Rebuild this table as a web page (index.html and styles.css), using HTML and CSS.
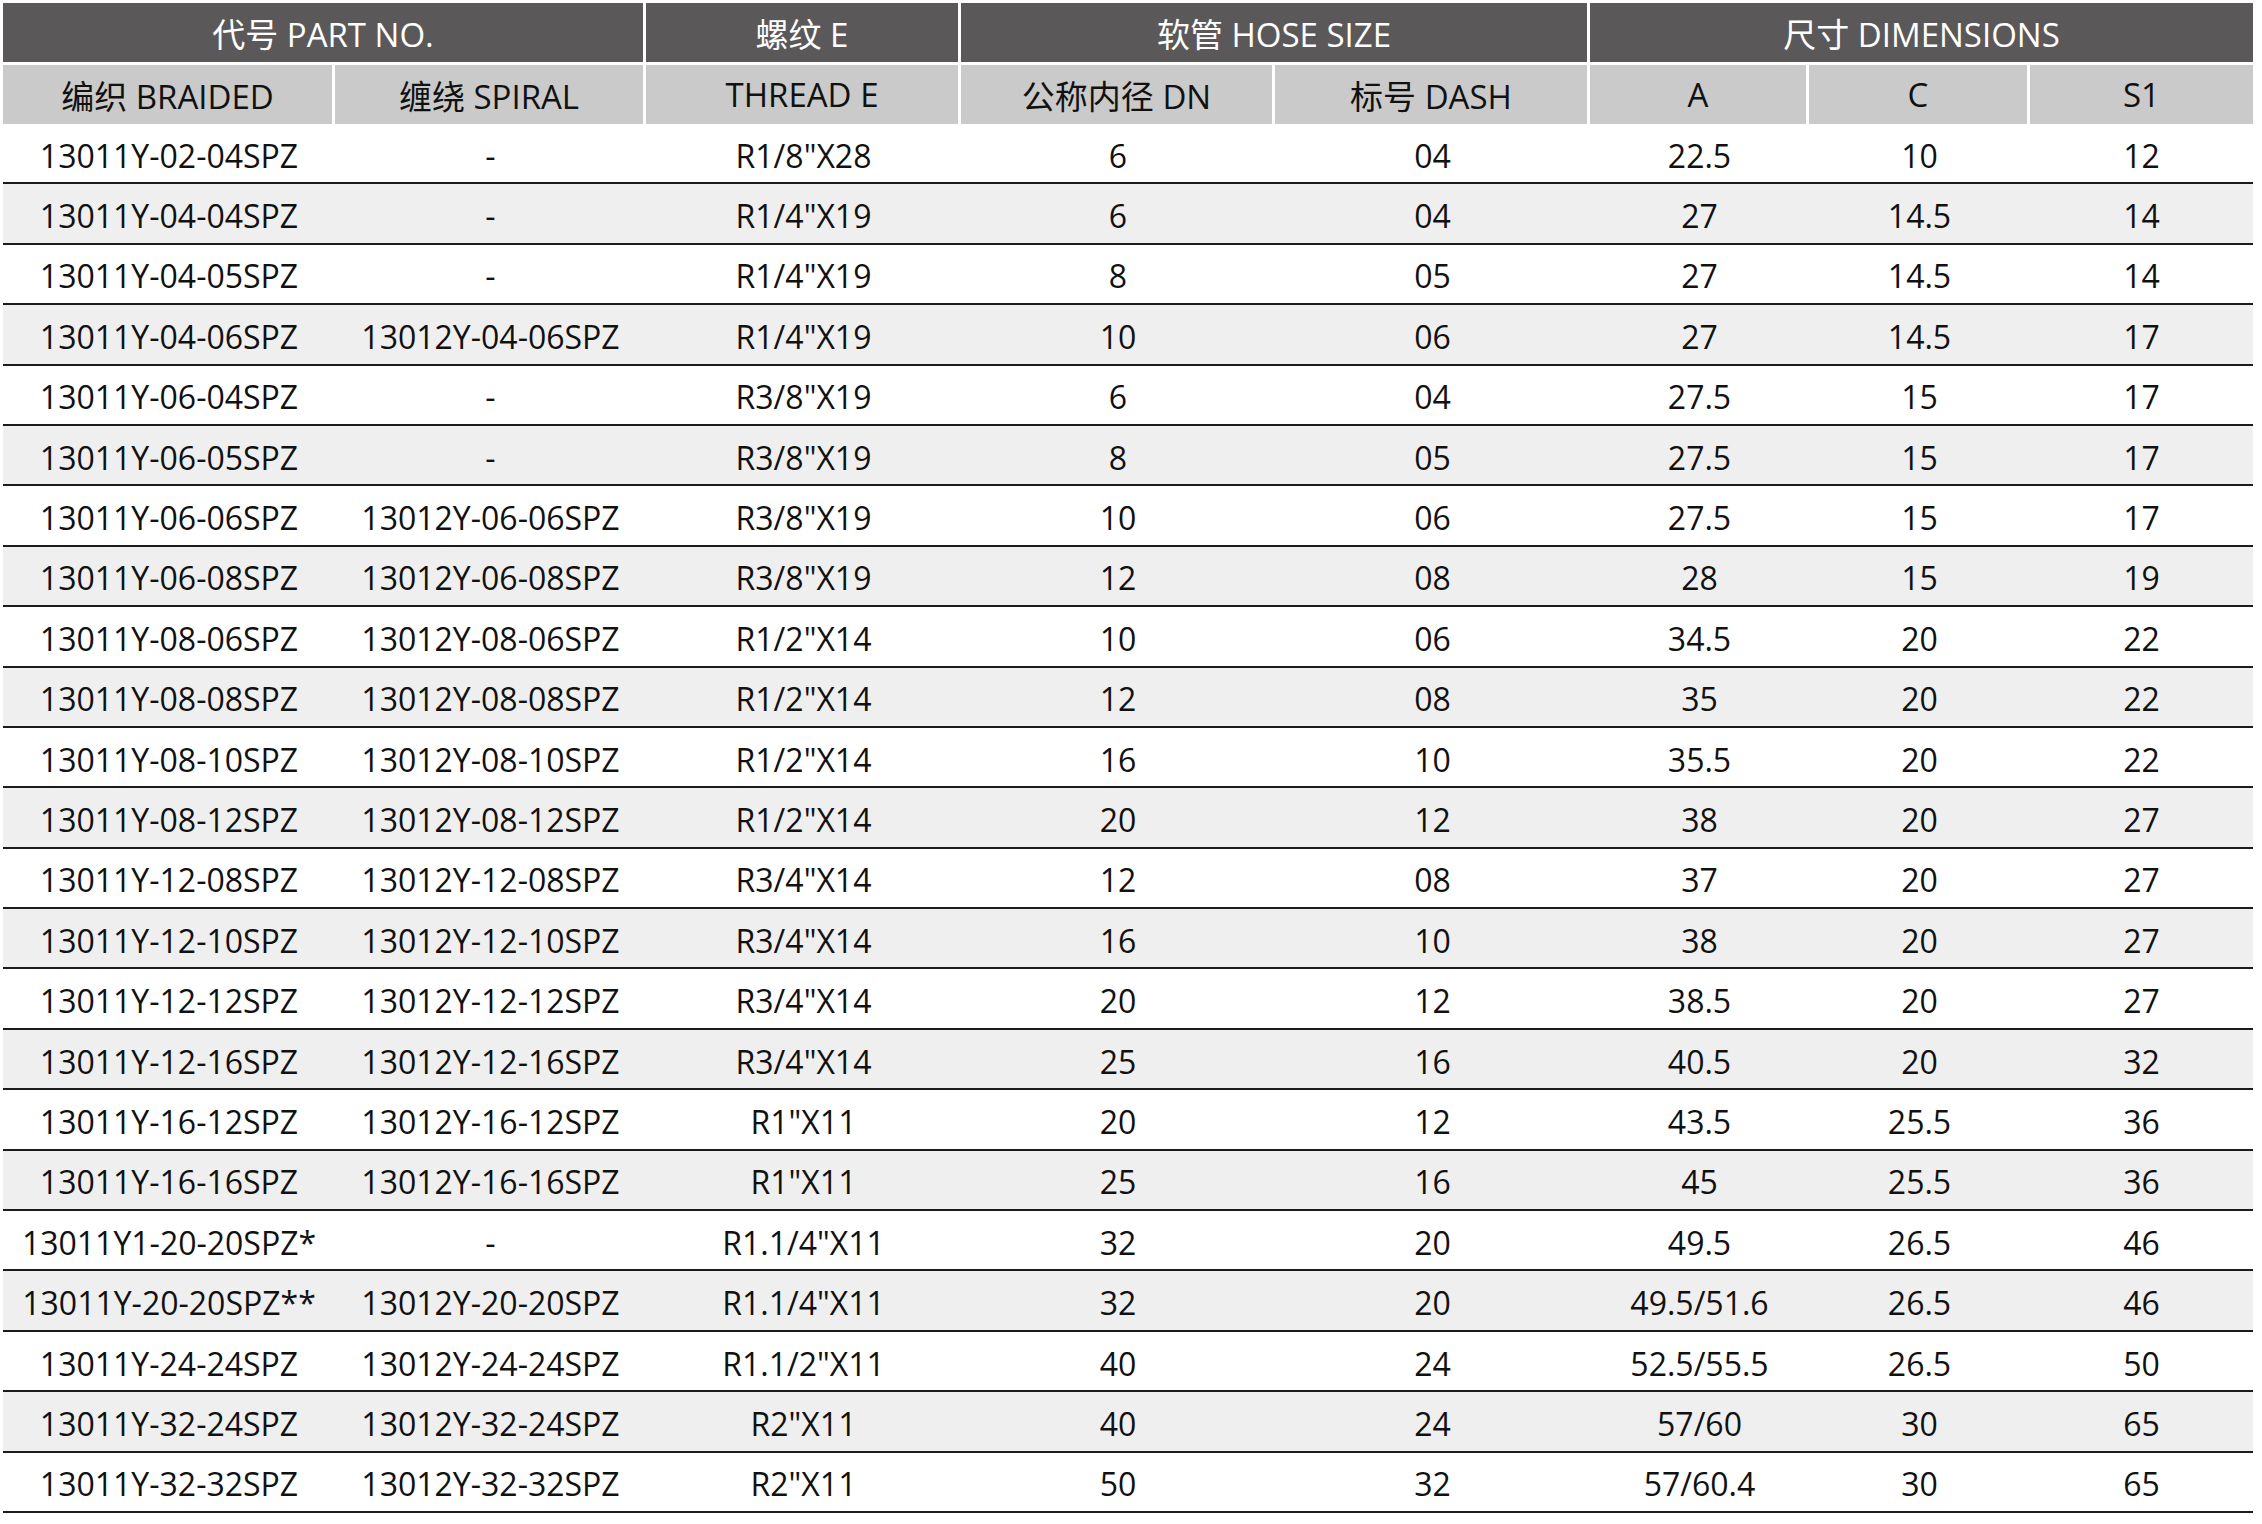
FILE: index.html
```html
<!DOCTYPE html>
<html lang="zh">
<head>
<meta charset="utf-8">
<title>13011Y</title>
<link rel="stylesheet" href="styles.css">
</head>
<body>
<div class="sheet">
  <div class="head">
    <div class="h1 span2">代号 PART NO.</div>
    <div class="h1">螺纹 E</div>
    <div class="h1 span2">软管 HOSE SIZE</div>
    <div class="h1 span3 last">尺寸 DIMENSIONS</div>
    <div class="h2">编织 BRAIDED</div>
    <div class="h2">缠绕 SPIRAL</div>
    <div class="h2">THREAD E</div>
    <div class="h2">公称内径 DN</div>
    <div class="h2">标号 DASH</div>
    <div class="h2">A</div>
    <div class="h2">C</div>
    <div class="h2 last">S1</div>
  </div>
  <div class="body">
    <div class="row"><span>13011Y-02-04SPZ</span><span>-</span><span>R1/8"X28</span><span>6</span><span>04</span><span>22.5</span><span>10</span><span>12</span></div>
    <div class="row alt"><span>13011Y-04-04SPZ</span><span>-</span><span>R1/4"X19</span><span>6</span><span>04</span><span>27</span><span>14.5</span><span>14</span></div>
    <div class="row"><span>13011Y-04-05SPZ</span><span>-</span><span>R1/4"X19</span><span>8</span><span>05</span><span>27</span><span>14.5</span><span>14</span></div>
    <div class="row alt"><span>13011Y-04-06SPZ</span><span>13012Y-04-06SPZ</span><span>R1/4"X19</span><span>10</span><span>06</span><span>27</span><span>14.5</span><span>17</span></div>
    <div class="row"><span>13011Y-06-04SPZ</span><span>-</span><span>R3/8"X19</span><span>6</span><span>04</span><span>27.5</span><span>15</span><span>17</span></div>
    <div class="row alt"><span>13011Y-06-05SPZ</span><span>-</span><span>R3/8"X19</span><span>8</span><span>05</span><span>27.5</span><span>15</span><span>17</span></div>
    <div class="row"><span>13011Y-06-06SPZ</span><span>13012Y-06-06SPZ</span><span>R3/8"X19</span><span>10</span><span>06</span><span>27.5</span><span>15</span><span>17</span></div>
    <div class="row alt"><span>13011Y-06-08SPZ</span><span>13012Y-06-08SPZ</span><span>R3/8"X19</span><span>12</span><span>08</span><span>28</span><span>15</span><span>19</span></div>
    <div class="row"><span>13011Y-08-06SPZ</span><span>13012Y-08-06SPZ</span><span>R1/2"X14</span><span>10</span><span>06</span><span>34.5</span><span>20</span><span>22</span></div>
    <div class="row alt"><span>13011Y-08-08SPZ</span><span>13012Y-08-08SPZ</span><span>R1/2"X14</span><span>12</span><span>08</span><span>35</span><span>20</span><span>22</span></div>
    <div class="row"><span>13011Y-08-10SPZ</span><span>13012Y-08-10SPZ</span><span>R1/2"X14</span><span>16</span><span>10</span><span>35.5</span><span>20</span><span>22</span></div>
    <div class="row alt"><span>13011Y-08-12SPZ</span><span>13012Y-08-12SPZ</span><span>R1/2"X14</span><span>20</span><span>12</span><span>38</span><span>20</span><span>27</span></div>
    <div class="row"><span>13011Y-12-08SPZ</span><span>13012Y-12-08SPZ</span><span>R3/4"X14</span><span>12</span><span>08</span><span>37</span><span>20</span><span>27</span></div>
    <div class="row alt"><span>13011Y-12-10SPZ</span><span>13012Y-12-10SPZ</span><span>R3/4"X14</span><span>16</span><span>10</span><span>38</span><span>20</span><span>27</span></div>
    <div class="row"><span>13011Y-12-12SPZ</span><span>13012Y-12-12SPZ</span><span>R3/4"X14</span><span>20</span><span>12</span><span>38.5</span><span>20</span><span>27</span></div>
    <div class="row alt"><span>13011Y-12-16SPZ</span><span>13012Y-12-16SPZ</span><span>R3/4"X14</span><span>25</span><span>16</span><span>40.5</span><span>20</span><span>32</span></div>
    <div class="row"><span>13011Y-16-12SPZ</span><span>13012Y-16-12SPZ</span><span>R1"X11</span><span>20</span><span>12</span><span>43.5</span><span>25.5</span><span>36</span></div>
    <div class="row alt"><span>13011Y-16-16SPZ</span><span>13012Y-16-16SPZ</span><span>R1"X11</span><span>25</span><span>16</span><span>45</span><span>25.5</span><span>36</span></div>
    <div class="row"><span>13011Y1-20-20SPZ*</span><span>-</span><span>R1.1/4"X11</span><span>32</span><span>20</span><span>49.5</span><span>26.5</span><span>46</span></div>
    <div class="row alt"><span>13011Y-20-20SPZ**</span><span>13012Y-20-20SPZ</span><span>R1.1/4"X11</span><span>32</span><span>20</span><span>49.5/51.6</span><span>26.5</span><span>46</span></div>
    <div class="row"><span>13011Y-24-24SPZ</span><span>13012Y-24-24SPZ</span><span>R1.1/2"X11</span><span>40</span><span>24</span><span>52.5/55.5</span><span>26.5</span><span>50</span></div>
    <div class="row alt"><span>13011Y-32-24SPZ</span><span>13012Y-32-24SPZ</span><span>R2"X11</span><span>40</span><span>24</span><span>57/60</span><span>30</span><span>65</span></div>
    <div class="row"><span>13011Y-32-32SPZ</span><span>13012Y-32-32SPZ</span><span>R2"X11</span><span>50</span><span>32</span><span>57/60.4</span><span>30</span><span>65</span></div>
  </div>
</div>
</body>
</html>
```
FILE: styles.css
```css
html, body {
  margin: 0;
  padding: 0;
  background: #ffffff;
}

.sheet {
  padding: 3px 0 0 3px;
  width: 2250px;
  font-family: "Open Sans", "Noto Sans CJK SC", sans-serif;
  font-size: 32px;
  color: #111111;
}

.head,
.row {
  display: grid;
  grid-template-columns: 332px 311px 315px 314px 315px 219px 221px 223px;
}

.h1,
.h2 {
  display: flex;
  align-items: center;
  justify-content: center;
  box-sizing: border-box;
  border-right: 3px solid #ffffff;
  border-bottom: 3px solid #ffffff;
  white-space: nowrap;
  font-size: 33px;
}

.h1 {
  height: 62px;
  padding-top: 0;
  background: #5b5859;
  color: #ffffff;
}

.h2 {
  height: 59px;
  border-bottom: none;
  padding-top: 0;
  background: #c9cac9;
  color: #111111;
}

.h1.last,
.h2.last {
  border-right: none;
}

.span2 { grid-column: span 2; }
.span3 { grid-column: span 3; }

.row {
  height: 60.4px;
  box-sizing: border-box;
  border-bottom: 2.5px solid #1c1c1c;
  background: #ffffff;
}

.row.alt {
  background: #efefef;
}

.row span {
  display: flex;
  align-items: center;
  justify-content: center;
  padding-top: 4px;
  white-space: nowrap;
}
```
